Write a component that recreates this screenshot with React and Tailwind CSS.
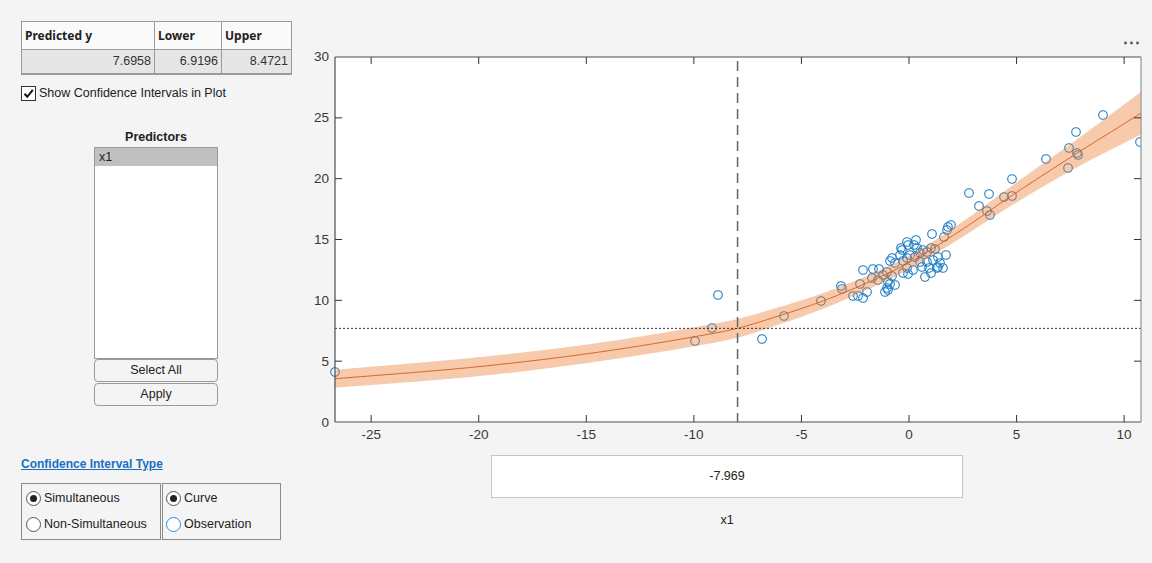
import React from "react";

const X = (v) => 909 + v * 21.514;
const Y = (v) => 422 - v * 12.1667;

function makeInterp(k) {
  const n = k.length;
  const m = k.map((p, i) => {
    if (i === 0) return (k[1][1] - k[0][1]) / (k[1][0] - k[0][0]);
    if (i === n - 1) return (k[n - 1][1] - k[n - 2][1]) / (k[n - 1][0] - k[n - 2][0]);
    const s0 = (k[i][1] - k[i - 1][1]) / (k[i][0] - k[i - 1][0]);
    const s1 = (k[i + 1][1] - k[i][1]) / (k[i + 1][0] - k[i][0]);
    return (s0 + s1) / 2;
  });
  return (x) => {
    let i = 0;
    while (i < n - 2 && x > k[i + 1][0]) i++;
    const [x0, y0] = k[i];
    const [x1, y1] = k[i + 1];
    const h = x1 - x0;
    const t = (x - x0) / h;
    const t2 = t * t;
    const t3 = t2 * t;
    return (
      (2 * t3 - 3 * t2 + 1) * y0 +
      (t3 - 2 * t2 + t) * h * m[i] +
      (-2 * t3 + 3 * t2) * y1 +
      (t3 - t2) * h * m[i + 1]
    );
  };
}

const fit = makeInterp([
  [-26.7, 3.55], [-20, 4.55], [-15, 5.6], [-10, 7.0], [-8, 7.69], [-6, 8.75],
  [-4, 9.95], [-2, 11.4], [0, 13.1], [2.37, 15.7], [4.77, 18.6], [7.82, 22.1], [10.8, 25.4],
]);
const half = makeInterp([
  [-26.7, 0.74], [-20, 0.78], [-14, 0.76], [-8, 0.77], [-5, 0.68], [-2, 0.58], [0, 0.55],
  [2.5, 0.62], [4.77, 0.8], [7.8, 1.15], [10.8, 1.75],
]);

const xs = [];
for (let v = -26.68; v <= 10.79; v += 0.1) xs.push(v);
xs.push(10.78);

const curvePath = xs.map((v, i) => `${i ? "L" : "M"}${X(v).toFixed(2)} ${Y(fit(v)).toFixed(2)}`).join(" ");
const upper = xs.map((v) => `${X(v).toFixed(2)} ${Y(fit(v) + half(v)).toFixed(2)}`);
const lower = xs.slice().reverse().map((v) => `${X(v).toFixed(2)} ${Y(fit(v) - half(v)).toFixed(2)}`);
const bandPath = "M" + upper.join(" L") + " L" + lower.join(" L") + " Z";

const pts = [
  [1103,115],[1076,132],[1069,148],[1077,153],[1078,155],[1068,168],[1046,159],[1140,142],[1012,179],[969,193],
  [989,194],[1004,197],[1012,196],[979,206],[987,211],[990,215],[951,225],[948,227],[932,234],[947,230],
  [944,237],[916,240],[907,242],[908,245],[914,245],[917,248],[901,248],[902,250],[923,250],[927,252],
  [931,248],[935,249],[946,255],[938,257],[892,258],[900,255],[910,255],[915,257],[920,253],[907,258],
  [890,261],[895,263],[903,261],[920,262],[927,262],[933,260],[940,263],[938,267],[943,268],[922,267],
  [929,268],[907,268],[913,270],[903,273],[908,274],[863,270],[873,269],[879,269],[887,272],[883,275],
  [892,276],[925,277],[931,273],[937,268],[878,280],[872,278],[888,282],[890,284],[860,284],[895,285],
  [841,286],[842,289],[887,288],[885,292],[888,290],[867,292],[853,296],[858,296],[863,298],[821,301],
  [784,316],[762,339],[712,328],[718,295],[695,341],[335,372],
];

const xTicks = [-25, -20, -15, -10, -5, 0, 5, 10];
const yTicks = [0, 5, 10, 15, 20, 25, 30];

function Chart() {
  return (
    <svg width="852" height="450" className="block shrink-0">
      <defs>
        <clipPath id="plotclip">
          <rect x="335" y="57" width="806" height="365" />
        </clipPath>
        <clipPath id="mclip">
          <rect x="320" y="40" width="821" height="390" />
        </clipPath>
      </defs>
      <g transform="translate(-300 0)">
        <rect x="335" y="57" width="806" height="365" fill="#ffffff" />
        <g clipPath="url(#mclip)">
          {pts.map(([x, y], i) => (
            <circle key={i} cx={x} cy={y} r="4.3" fill="none" stroke="#1a7cc4" strokeWidth="1.1" />
          ))}
        </g>
        <g clipPath="url(#plotclip)">
          <path d={bandPath} fill="#ee7a30" fillOpacity="0.4" />
          <path d={curvePath} fill="none" stroke="#e0601e" strokeWidth="1" />
          <line x1="335" x2="1141" y1={Y(7.6958)} y2={Y(7.6958)} stroke="#333" strokeWidth="1" strokeDasharray="2 2" />
          <line x1={X(-7.969)} x2={X(-7.969)} y1="61" y2="422" stroke="#666" strokeWidth="1.5" strokeDasharray="10 6" />
        </g>
        <line x1="335" x2="1141" y1="57" y2="57" stroke="#4d4d4d" strokeWidth="1" />
        <line x1="335" x2="1141" y1="422" y2="422" stroke="#4d4d4d" strokeWidth="1.2" />
        <line x1="335" x2="335" y1="57" y2="422" stroke="#4d4d4d" strokeWidth="1.2" />
        <line x1="1141" x2="1141" y1="57" y2="422" stroke="#9a9a9a" strokeWidth="1.3" />
        {xTicks.map((t) => (
          <g key={t}>
            <line x1={X(t)} x2={X(t)} y1="422" y2="415" stroke="#333" strokeWidth="1" />
            <line x1={X(t)} x2={X(t)} y1="57" y2="64" stroke="#333" strokeWidth="1" />
            <text
              x={X(t)}
              y="439"
              textAnchor="middle"
              fontSize="13.5"
              fill="#383838"
              style={{ fontFamily: '"Liberation Sans", Arial, sans-serif' }}
            >
              {t}
            </text>
          </g>
        ))}
        {yTicks.map((t) => (
          <g key={t}>
            {t > 0 && t < 30 && (
              <>
                <line x1="335" x2="342" y1={Y(t)} y2={Y(t)} stroke="#333" strokeWidth="1" />
                <line x1="1141" x2="1134" y1={Y(t)} y2={Y(t)} stroke="#333" strokeWidth="1" />
              </>
            )}
            <text
              x="329"
              y={Y(t) + 4.5}
              textAnchor="end"
              fontSize="13.5"
              fill="#383838"
              style={{ fontFamily: '"Liberation Sans", Arial, sans-serif' }}
            >
              {t}
            </text>
          </g>
        ))}
        <circle cx="1125.5" cy="43" r="1.4" fill="#555" />
        <circle cx="1131.5" cy="43" r="1.4" fill="#555" />
        <circle cx="1137.5" cy="43" r="1.4" fill="#555" />
      </g>
    </svg>
  );
}

function Radio({ checked, label, focus }) {
  return (
    <div className="flex h-[14px] items-center gap-[3px]">
      <div
        className={`flex h-[15px] w-[15px] items-center justify-center rounded-full border bg-white ${
          focus ? "border-[#2d8be0]" : "border-[#555]"
        }`}
      >
        {checked && <div className="h-[7px] w-[7px] rounded-full bg-[#222]" />}
      </div>
      <span className="text-[12.5px] text-[#222]">{label}</span>
    </div>
  );
}

export default function App() {
  return (
    <div
      className="flex h-[563px] w-[1152px] overflow-hidden bg-[#f4f4f4] text-[#222]"
      style={{ fontFamily: '"Liberation Sans", Arial, sans-serif' }}
    >
      <div className="flex w-[300px] shrink-0 flex-col pl-[21px] pt-[21px]">
        <div className="w-[271px] border border-[#9a9a9a] border-b-2">
          <div
            className="grid h-[28px] grid-cols-[133px_67px_69px] bg-[#fafafa] border-b border-[#9a9a9a] text-[12px] font-bold text-[#222]"
            style={{ fontFamily: '"Noto Sans", "Open Sans", sans-serif' }}
          >
            <div className="flex items-center border-r border-[#9a9a9a] pl-[3px]">Predicted y</div>
            <div className="flex items-center border-r border-[#9a9a9a] pl-[3px]">Lower</div>
            <div className="flex items-center pl-[3px]">Upper</div>
          </div>
          <div className="grid h-[23px] grid-cols-[133px_67px_69px] bg-[#e6e6e6] text-[12.5px] text-[#333]">
            <div className="flex items-center justify-end border-r border-[#9a9a9a] pr-[3px]">7.6958</div>
            <div className="flex items-center justify-end border-r border-[#9a9a9a] pr-[3px]">6.9196</div>
            <div className="flex items-center justify-end pr-[3px]">8.4721</div>
          </div>
        </div>

        <div className="mt-[11px] flex h-[15px] items-center gap-[3px]">
          <div className="flex h-[15px] w-[15px] items-center justify-center border border-[#333] bg-white">
            <svg width="13" height="13" viewBox="0 0 13 13">
              <path d="M2.5 6.8 L5.3 9.8 L10.8 2.8" fill="none" stroke="#111" strokeWidth="2" />
            </svg>
          </div>
          <span className="text-[12.5px]">Show Confidence Intervals in Plot</span>
        </div>

        <div className="ml-[73px] mt-[29px] flex w-[124px] flex-col">
          <div className="h-[15px] text-center text-[12.5px] font-bold leading-[15px]">Predictors</div>
          <div className="mt-[2px] h-[212px] border border-[#9a9a9a] bg-white">
            <div className="flex h-[18px] items-center bg-[#c0c0c0] pl-[4px] text-[12.5px]">x1</div>
          </div>
          <div className="flex h-[23px] items-center justify-center rounded-[4px] border border-[#9a9a9a] bg-[#f4f4f4] text-[12.5px]">
            Select All
          </div>
          <div className="mt-[1px] flex h-[23px] items-center justify-center rounded-[4px] border border-[#9a9a9a] bg-[#f4f4f4] text-[12.5px]">
            Apply
          </div>
        </div>

        <div className="mt-[51px] h-[15px] text-[12px] font-bold leading-[15px] text-[#1a6fc2] underline">
          Confidence Interval Type
        </div>

        <div className="mt-[11px] flex">
          <div className="flex h-[57px] w-[140px] flex-col gap-[12px] border border-[#8a8a8a] pl-[4px] pt-[7px]">
            <Radio checked label="Simultaneous" />
            <Radio label="Non-Simultaneous" />
          </div>
          <div className="ml-[1px] flex h-[57px] w-[119px] flex-col gap-[12px] border border-[#8a8a8a] pl-[3px] pt-[7px]">
            <Radio checked label="Curve" />
            <Radio label="Observation" focus />
          </div>
        </div>
      </div>

      <div className="flex flex-1 flex-col">
        <Chart />
        <div className="ml-[191px] mt-[5px] flex h-[43px] w-[472px] items-center justify-center border border-[#c4c4c4] bg-white text-[12.5px]">
          -7.969
        </div>
        <div className="ml-[191px] mt-[14px] w-[472px] text-center text-[12.5px] leading-[16px]">x1</div>
      </div>
    </div>
  );
}
